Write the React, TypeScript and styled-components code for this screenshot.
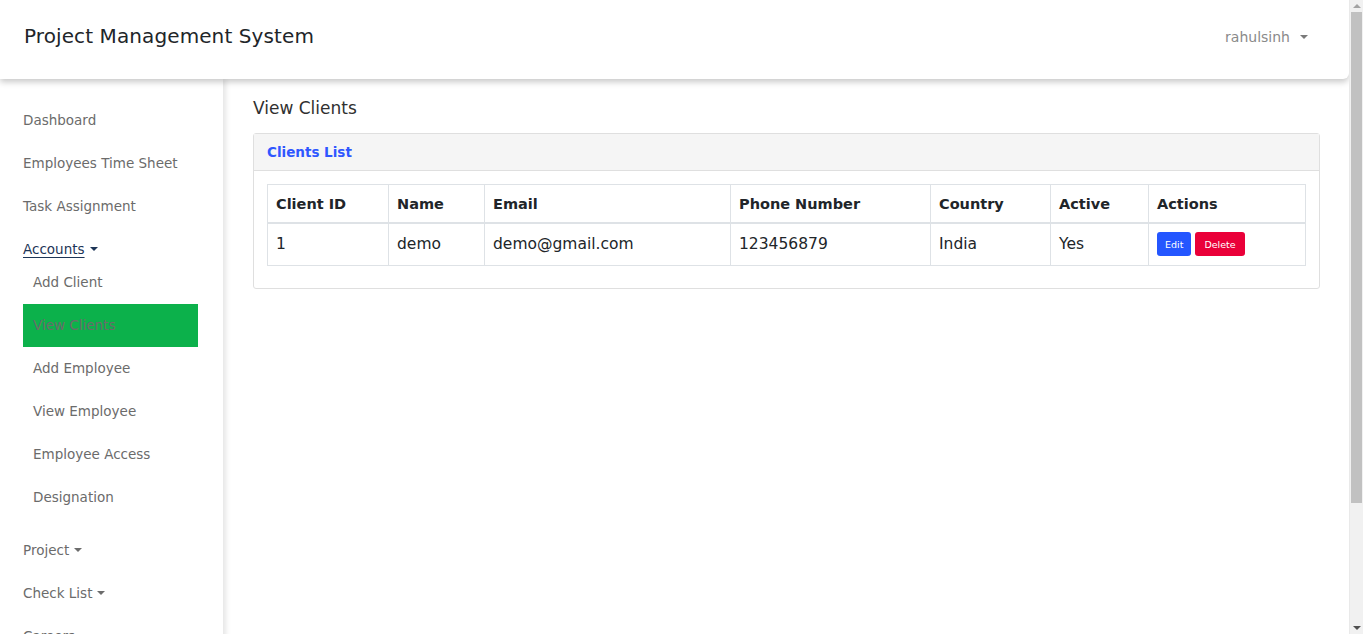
import React from "react";
import styled, { createGlobalStyle } from "styled-components";

const GlobalStyle = createGlobalStyle`
  html, body { margin: 0; padding: 0; background: #fff; }
  body {
    font-family: "DejaVu Sans", "Open Sans", sans-serif;
    color: #212529;
  }
  * { box-sizing: border-box; }
`;

const Page = styled.div`
  min-height: 784px;
  margin-right: 14px;
  background: #fff;
`;

const Header = styled.header`
  position: relative;
  z-index: 2;
  height: 79px;
  display: flex;
  align-items: center;
  justify-content: space-between;
  padding: 0 41px 0 24px;
  background: #fff;
  border-bottom-right-radius: 6px;
  box-shadow: 0 3px 6px rgba(0, 0, 0, 0.22);
`;

const Brand = styled.div`
  font-size: 20px;
  color: #212529;
  letter-spacing: 0.1px;
  margin-top: -7px;
`;

const UserMenu = styled.div`
  display: flex;
  align-items: center;
  gap: 10px;
  font-size: 14px;
  color: #8a8a8a;
  margin-top: -5px;
`;

const Caret = styled.span<{ $color?: string; $gap?: number }>`
  display: inline-block;
  width: 0;
  height: 0;
  border-left: 4px solid transparent;
  border-right: 4px solid transparent;
  border-top: 4px solid ${(p) => p.$color || "#6c6c6c"};
  margin-left: ${(p) => (p.$gap ?? 5)}px;
  vertical-align: 3px;
`;

const Body = styled.div`
  display: flex;
  align-items: stretch;
`;

const Sidebar = styled.nav`
  width: 223px;
  flex: none;
  padding: 20px 25px 60px 23px;
  background: #fff;
  box-shadow: 3px 0 5px rgba(0, 0, 0, 0.1);
  min-height: 705px;
`;

const NavLink = styled.div<{ $open?: boolean; $active?: boolean }>`
  padding: ${(p) => (p.$open ? "10px 0 0" : "10px 0")};
  line-height: 23px;
  font-size: 13.5px;
  color: ${(p) => (p.$active ? "#1d3557" : "#6b6b6b")};
  text-decoration: ${(p) => (p.$active ? "underline" : "none")};
  text-underline-offset: 3px;
  white-space: nowrap;
`;

const SubMenu = styled.div`
  margin-bottom: 9.5px;
`;

const SubLink = styled.div<{ $selected?: boolean }>`
  padding: 10px 0 10px 10px;
  line-height: 23px;
  font-size: 13.5px;
  color: #6b6b6b;
  background: ${(p) => (p.$selected ? "#0cb14b" : "transparent")};
  white-space: nowrap;
`;

const Main = styled.main`
  flex: 1;
  padding: 16px 30px 0 30px;
`;

const Title = styled.h1`
  margin: 0 0 11px;
  font-size: 17px;
  line-height: 27px;
  font-weight: 400;
  color: #303030;
`;

const Card = styled.section`
  border: 1px solid #dfdfdf;
  border-radius: 3px;
  background: #fff;
`;

const CardHeader = styled.div`
  height: 37px;
  display: flex;
  align-items: center;
  padding: 0 13px;
  background: #f5f5f5;
  border-bottom: 1px solid #dfdfdf;
  font-size: 13.5px;
  font-weight: 700;
  color: #2f57ff;
`;

const CardBody = styled.div`
  padding: 13px 13px 22px;
`;

const Table = styled.table`
  width: 100%;
  border-collapse: collapse;
  table-layout: fixed;
  border: 1px solid #dee2e6;
  font-size: 15.5px;
`;

const Th = styled.th`
  text-align: left;
  font-weight: 700;
  font-size: 14.5px;
  color: #212529;
  padding: 7px 8px 6px;
  line-height: 24px;
  border: 1px solid #dee2e6;
  border-bottom: 2px solid #dee2e6;
  white-space: nowrap;
`;

const Td = styled.td`
  padding: 8px 8px 9px;
  line-height: 24px;
  border: 1px solid #dee2e6;
  color: #212529;
  vertical-align: middle;
  white-space: nowrap;
`;

const Actions = styled.div`
  display: flex;
  gap: 4px;
`;

const Btn = styled.button<{ $variant: "edit" | "delete" }>`
  height: 24px;
  padding: 0 ${(p) => (p.$variant === "edit" ? "8px" : "9px")};
  border: none;
  border-radius: 3px;
  font-family: inherit;
  font-size: 9.5px;
  color: #fff;
  background: ${(p) => (p.$variant === "edit" ? "#2456ff" : "#ea0039")};
  cursor: pointer;
`;

/* Fake browser scrollbar drawn over the right edge, as in the reference */
const ScrollTrack = styled.div`
  position: fixed;
  top: 0;
  right: 0;
  bottom: 0;
  width: 14px;
  background: #f1f1f1;
  border-left: 1px solid #e9e9e9;
  z-index: 10;
`;

const ScrollThumb = styled.div`
  position: absolute;
  top: 12px;
  left: 1px;
  right: 1px;
  height: 491px;
  background: #c1c1c1;
`;

const ScrollArrow = styled.span<{ $dir: "up" | "down" }>`
  position: absolute;
  left: 3px;
  width: 0;
  height: 0;
  border-left: 4px solid transparent;
  border-right: 4px solid transparent;
  ${(p) =>
    p.$dir === "up"
      ? "top: 4px; border-bottom: 4px solid #a3a3a3;"
      : "bottom: 4px; border-top: 4px solid #505050;"}
`;

const columns = [
  { label: "Client ID", width: 121 },
  { label: "Name", width: 96 },
  { label: "Email", width: 246 },
  { label: "Phone Number", width: 200 },
  { label: "Country", width: 120 },
  { label: "Active", width: 98 },
  { label: "Actions", width: 157 },
];

const topLinks = ["Dashboard", "Employees Time Sheet", "Task Assignment"];
const accountLinks = [
  "Add Client",
  "View Clients",
  "Add Employee",
  "View Employee",
  "Employee Access",
  "Designation",
];
const lowerLinks = ["Project", "Check List", "Careers"];

export default function App() {
  return (
    <Page>
      <GlobalStyle />
      <Header>
        <Brand>Project Management System</Brand>
        <UserMenu>
          rahulsinh
          <Caret $color="#7a7a7a" $gap={0} />
        </UserMenu>
      </Header>
      <Body>
        <Sidebar>
          {topLinks.map((l) => (
            <NavLink key={l}>{l}</NavLink>
          ))}
          <NavLink $open $active>
            Accounts
            <Caret $color="#1d3557" />
          </NavLink>
          <SubMenu>
            {accountLinks.map((l) => (
              <SubLink key={l} $selected={l === "View Clients"}>
                {l}
              </SubLink>
            ))}
          </SubMenu>
          {lowerLinks.map((l) => (
            <NavLink key={l}>
              {l}
              <Caret />
            </NavLink>
          ))}
        </Sidebar>
        <Main>
          <Title>View Clients</Title>
          <Card>
            <CardHeader>Clients List</CardHeader>
            <CardBody>
              <Table>
                <colgroup>
                  {columns.map((c) => (
                    <col key={c.label} style={{ width: c.width }} />
                  ))}
                </colgroup>
                <thead>
                  <tr>
                    {columns.map((c) => (
                      <Th key={c.label}>{c.label}</Th>
                    ))}
                  </tr>
                </thead>
                <tbody>
                  <tr>
                    <Td>1</Td>
                    <Td>demo</Td>
                    <Td>demo@gmail.com</Td>
                    <Td>123456879</Td>
                    <Td>India</Td>
                    <Td>Yes</Td>
                    <Td>
                      <Actions>
                        <Btn $variant="edit">Edit</Btn>
                        <Btn $variant="delete">Delete</Btn>
                      </Actions>
                    </Td>
                  </tr>
                </tbody>
              </Table>
            </CardBody>
          </Card>
        </Main>
      </Body>
      <ScrollTrack>
        <ScrollArrow $dir="up" />
        <ScrollThumb />
        <ScrollArrow $dir="down" />
      </ScrollTrack>
    </Page>
  );
}
